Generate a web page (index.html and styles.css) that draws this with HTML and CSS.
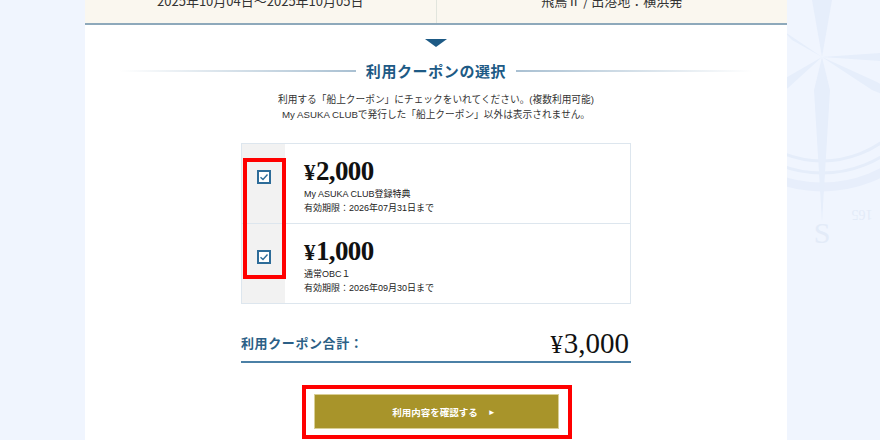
FILE: index.html
```html
<!DOCTYPE html>
<html lang="ja">

<head>
    <meta charset="UTF-8">
    <meta name="viewport" content="width=device-width, initial-scale=1.0">
    <title>利用クーポンの選択</title>
    <link rel="stylesheet" href="styles.css">
</head>

<body>
    <svg class="compass" width="200" height="300" viewBox="0 0 200 300" aria-hidden="true">
        <g fill="none" stroke="#e5edfa" stroke-width="3">
            <circle cx="100" cy="57" r="104"></circle>
            <circle cx="100" cy="57" r="116"></circle>
        </g>
        <circle cx="100" cy="57" r="130" fill="none" stroke="#e7eefb" stroke-width="9"></circle>
        <g fill="#e6eefb">
            <polygon points="100,57 92,90 100,222 108,90"></polygon>
            <polygon points="100,57 60,30 40,8 70,40"></polygon>
            <polygon points="100,57 200,50 200,64"></polygon>
            <polygon points="100,57 60,80 20,110 66,88"></polygon>
            <polygon points="100,57 150,90 200,110 155,82"></polygon>
            <polygon points="100,57 90,0 110,0"></polygon>
        </g>
        <text x="100" y="243" text-anchor="middle" class="compass-letter">S</text>
        <text x="140" y="200" text-anchor="middle" class="compass-num" transform="rotate(180 140 205)">165</text>
    </svg>

    <div class="page">
        <div class="cruise-info">
            <div class="cruise-cell">2025年10月04日～2025年10月05日</div>
            <div class="cruise-cell">飛鳥Ⅱ / 出港地：横浜発</div>
        </div>

        <div class="section">
            <div class="arrow-down"></div>
            <h2 class="section-title"><span>利用クーポンの選択</span></h2>
            <p class="lead">利用する「船上クーポン」にチェックをいれてください。(複数利用可能)<br>My ASUKA CLUBで発行した「船上クーポン」以外は表示されません。</p>

            <div class="coupon-list">
                <label class="coupon">
                    <span class="coupon-check">
                        <span class="checkbox">
                            <svg width="10" height="10" viewBox="0 0 10 10"><polyline points="1.5,5.2 4,7.5 8.5,2.5" fill="none" stroke="#2d6c99" stroke-width="1.4"></polyline></svg>
                        </span>
                    </span>
                    <span class="coupon-body">
                        <span class="coupon-amount"><span class="yen">¥</span>2,000</span>
                        <span class="coupon-text">My ASUKA CLUB登録特典</span>
                        <span class="coupon-text">有効期限：2026年07月31日まで</span>
                    </span>
                </label>
                <label class="coupon">
                    <span class="coupon-check">
                        <span class="checkbox">
                            <svg width="10" height="10" viewBox="0 0 10 10"><polyline points="1.5,5.2 4,7.5 8.5,2.5" fill="none" stroke="#2d6c99" stroke-width="1.4"></polyline></svg>
                        </span>
                    </span>
                    <span class="coupon-body">
                        <span class="coupon-amount"><span class="yen">¥</span>1,000</span>
                        <span class="coupon-text">通常OBC１</span>
                        <span class="coupon-text">有効期限：2026年09月30日まで</span>
                    </span>
                </label>
                <div class="mark mark-checks"></div>
            </div>

            <div class="coupon-total">
                <span class="total-label">利用クーポン合計：</span>
                <span class="total-value"><span class="yen">¥</span>3,000</span>
            </div>

            <div class="action">
                <div class="btn-wrap">
                    <button class="btn-confirm">利用内容を確認する<span class="btn-arrow">►</span></button>
                    <div class="mark mark-button"></div>
                </div>
            </div>
        </div>
    </div>
</body>

</html>
```

FILE: styles.css
```css
:root {
    --bg: #f0f5fe;
    --navy: #1d5a85;
    --line-blue: #4b80a6;
    --text: #333333;
    --gold: #a8942a;
    --mark: #ff0000;
}

body {
    margin: 0;
    background-color: var(--bg);
    font-family: "Liberation Sans", "Noto Sans CJK JP", sans-serif;
    color: var(--text);
    overflow: hidden;
    position: relative;
    height: 440px;
}

.compass {
    position: absolute;
    left: 722px;
    top: 0;
}

.compass-letter {
    font-family: "Liberation Serif", serif;
    font-size: 30px;
    fill: #e3ebf8;
}

.compass-num {
    font-family: "Liberation Serif", serif;
    font-size: 14px;
    fill: #e3ebf8;
}

.page {
    position: relative;
    width: 702px;
    margin-left: 85px;
    min-height: 440px;
    background-color: #fff;
}

.cruise-info {
    display: flex;
    height: 23px;
    background-color: #faf7ef;
    border-bottom: 2px solid #8ea9bb;
    overflow: hidden;
}

.cruise-cell {
    flex: 1;
    text-align: center;
    font-size: 13px;
    line-height: 13px;
    margin-top: -6px;
    padding-bottom: 16px;
    font-family: "Noto Sans CJK JP", sans-serif;
}

.cruise-cell + .cruise-cell {
    border-left: 1px solid #e1e5dd;
}

.section {
    display: flex;
    flex-direction: column;
    align-items: center;
    padding-top: 14px;
}

.arrow-down {
    width: 0;
    height: 0;
    border-left: 11px solid transparent;
    border-right: 11px solid transparent;
    border-top: 8px solid var(--navy);
}

.section-title {
    margin: 14px 0 0;
    width: 634px;
    display: flex;
    align-items: center;
    gap: 10px;
    font-family: "Noto Sans CJK JP", sans-serif;
    font-size: 15px;
    line-height: 20px;
    font-weight: 700;
    letter-spacing: 0.6px;
    color: var(--navy);
}

.section-title::before,
.section-title::after {
    content: "";
    flex: 1;
    height: 2px;
}

.section-title::before {
    background: linear-gradient(to right, rgba(170, 194, 212, 0), #a9c0d2);
}

.section-title::after {
    background: linear-gradient(to left, rgba(170, 194, 212, 0), #a9c0d2);
}

.lead {
    margin: 11px 0 0;
    font-size: 9.7px;
    line-height: 15px;
    text-align: center;
}

.coupon-list {
    position: relative;
    width: 388px;
    margin-top: 21px;
    border: 1px solid #dde6ee;
}

.coupon {
    display: flex;
    height: 79px;
    cursor: pointer;
}

.coupon + .coupon {
    border-top: 1px solid #dde6ee;
}

.coupon-check {
    width: 43px;
    flex-shrink: 0;
    background-color: #f2f2f2;
    display: flex;
    justify-content: center;
    align-items: flex-start;
    padding-top: 26px;
    box-sizing: border-box;
}

.checkbox {
    width: 14px;
    height: 14px;
    box-sizing: border-box;
    border: 2px solid #2d6c99;
    background-color: #fff;
    display: flex;
    align-items: center;
    justify-content: center;
}

.coupon-body {
    display: flex;
    flex-direction: column;
    padding: 13px 0 0 19px;
}

.coupon-amount {
    font-family: "Liberation Serif", serif;
    font-weight: 700;
    font-size: 27px;
    line-height: 28px;
    letter-spacing: -0.6px;
    color: #111;
}

.yen {
    font-size: 0.85em;
    margin-right: 1px;
}

.coupon-text {
    font-size: 9px;
    line-height: 14px;
    color: #222;
}

.mark {
    position: absolute;
    box-sizing: border-box;
    border: 4px solid var(--mark);
    pointer-events: none;
}

.mark-checks {
    left: 1px;
    top: 14px;
    width: 43px;
    height: 121px;
}

.coupon-total {
    width: 390px;
    margin-top: 24px;
    display: flex;
    justify-content: space-between;
    align-items: flex-start;
    border-bottom: 2px solid var(--line-blue);
    padding-bottom: 1px;
}

.total-label {
    font-family: "Noto Sans CJK JP", sans-serif;
    font-weight: 700;
    font-size: 13px;
    line-height: 19px;
    letter-spacing: 0.6px;
    color: #2b5f86;
    margin-top: 5px;
}

.total-value {
    font-family: "Liberation Serif", serif;
    font-size: 29px;
    line-height: 30px;
    color: #111;
    margin-right: 2px;
}

.action {
    margin-top: 31px;
    display: flex;
    justify-content: center;
}

.btn-wrap {
    position: relative;
}

.btn-confirm {
    width: 245px;
    height: 35px;
    background-color: var(--gold);
    border: 1px solid #d9cf95;
    color: #fff;
    font-family: "Noto Sans CJK JP", sans-serif;
    font-size: 9.5px;
    font-weight: 700;
    cursor: pointer;
    display: flex;
    align-items: center;
    justify-content: center;
    padding: 0 0 0 16px;
}

.btn-arrow {
    font-size: 8px;
    margin-left: 10px;
}

.mark-button {
    left: -12px;
    top: -9px;
    right: -13px;
    bottom: -10px;
}
```
